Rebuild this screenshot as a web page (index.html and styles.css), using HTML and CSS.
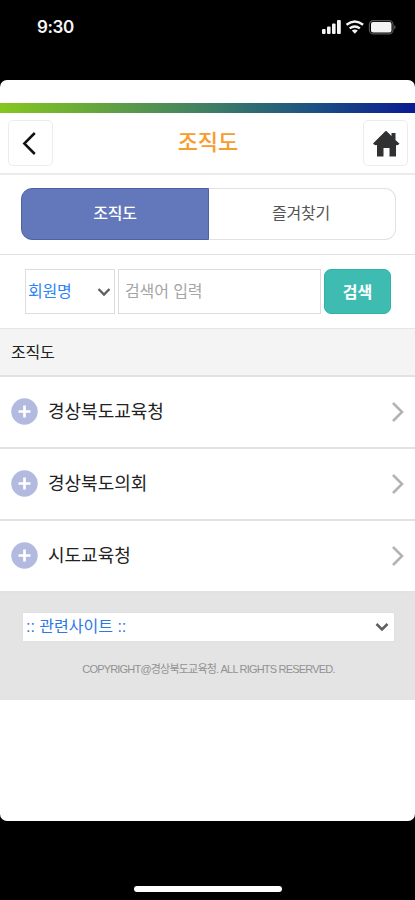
FILE: index.html
```html
<!DOCTYPE html>
<html lang="ko">
<head>
<meta charset="utf-8">
<meta name="viewport" content="width=device-width, initial-scale=1">
<title>조직도</title>
<link rel="stylesheet" href="styles.css">
</head>
<body>
<div class="status">
  <span class="time">9:30</span>
  <svg class="status-icons" width="76" height="16" viewBox="0 0 76 16">
    <g fill="#f4f4f4">
      <rect x="0" y="9" width="3.600" height="5" rx="1"/>
      <rect x="5" y="6.500" width="3.600" height="7.500" rx="1"/>
      <rect x="10" y="3.500" width="3.600" height="10.500" rx="1"/>
      <rect x="15" y="0" width="3.800" height="14" rx="1"/>
      <path d="M32.800 13.800l-3-3.300q3-2.200 6 0z"/>
      <rect x="49" y="2" width="20.500" height="10.500" rx="2"/>
    </g>
    <g fill="none" stroke="#f4f4f4" stroke-width="2.400">
      <path d="M24.500 4.800q8.300-6.500 16.600 0"/>
      <path d="M27.700 8.400q5-3.800 10.200 0"/>
    </g>
    <rect x="47.400" y=".6" width="23.600" height="13.300" rx="4" fill="none" stroke="#555" stroke-width="1.200"/>
    <path d="M72.400 5q2.200 2.200 0 4.500z" fill="#777"/>
  </svg>
</div>
<main class="screen">
  <div class="brand-bar"></div>
  <header class="header">
    <button class="icon-btn" aria-label="이전">
      <svg width="43" height="43" viewBox="0 0 43 43"><path d="M25.800 11L15.300 21.500 25.800 32" fill="none" stroke="#111" stroke-width="2.500"/></svg>
    </button>
    <h1 class="title">조직도</h1>
    <button class="icon-btn" aria-label="홈">
      <svg width="43" height="43" viewBox="0 0 43 43"><path d="M9 21.500L21.300 9.300q.7-.6 1.400 0L27.500 14v-3h4v7l4 3.700q-1.500 2-3.500 1.300v11.500h-6.500v-8.500h-6v8.500h-6.500V23q-2.500.6-4-1.500z" fill="#303133"/></svg>
    </button>
  </header>
  <nav class="tabs">
    <div class="tab tab-active">조직도</div>
    <div class="tab">즐겨찾기</div>
  </nav>
  <div class="search">
    <div class="field kind">
      <span>회원명</span>
      <svg width="14" height="10" viewBox="0 0 14 10"><path d="M1.500 2L7 7.500 12.500 2" fill="none" stroke="#606060" stroke-width="2.300"/></svg>
    </div>
    <div class="field keyword">검색어 입력</div>
    <button class="go">검색</button>
  </div>
  <h2 class="section">조직도</h2>
  <ul class="list">
    <li class="row">
      <svg class="plus" width="27" height="27" viewBox="0 0 27 27"><circle cx="13.500" cy="13.500" r="13.200" fill="#b2badf"/><path d="M13.500 7.500v12M7.500 13.500h12" stroke="#fff" stroke-width="2.700"/></svg>
      <span class="name">경상북도교육청</span>
      <svg width="14" height="22" viewBox="0 0 14 22"><path d="M2 2l9 9-9 9" fill="none" stroke="#b3b3b3" stroke-width="2.600"/></svg>
    </li>
    <li class="row">
      <svg class="plus" width="27" height="27" viewBox="0 0 27 27"><circle cx="13.500" cy="13.500" r="13.200" fill="#b2badf"/><path d="M13.500 7.500v12M7.500 13.500h12" stroke="#fff" stroke-width="2.700"/></svg>
      <span class="name">경상북도의회</span>
      <svg width="14" height="22" viewBox="0 0 14 22"><path d="M2 2l9 9-9 9" fill="none" stroke="#b3b3b3" stroke-width="2.600"/></svg>
    </li>
    <li class="row">
      <svg class="plus" width="27" height="27" viewBox="0 0 27 27"><circle cx="13.500" cy="13.500" r="13.200" fill="#b2badf"/><path d="M13.500 7.500v12M7.500 13.500h12" stroke="#fff" stroke-width="2.700"/></svg>
      <span class="name">시도교육청</span>
      <svg width="14" height="22" viewBox="0 0 14 22"><path d="M2 2l9 9-9 9" fill="none" stroke="#b3b3b3" stroke-width="2.600"/></svg>
    </li>
  </ul>
  <footer class="footer">
    <div class="sites">
      <span>:: 관련사이트 ::</span>
      <svg width="14" height="10" viewBox="0 0 14 10"><path d="M1.500 2L7 7.500 12.500 2" fill="none" stroke="#606060" stroke-width="2.600"/></svg>
    </div>
    <p class="copyright">COPYRIGHT@경상북도교육청. ALL RIGHTS RESERVED.</p>
  </footer>
</main>
<div class="home-area"><div class="home-bar"></div></div>
</body>
</html>
```
FILE: styles.css
```css
* { box-sizing: border-box; }
body {
  margin: 0;
  height: 900px;
  display: flex;
  flex-direction: column;
  background: #000;
  color: #222;
  font-family: "Noto Sans CJK KR", sans-serif;
  overflow: hidden;
}
h1, h2, p, ul { margin: 0; padding: 0; }
svg { display: block; flex: none; }
button { padding: 0; font-family: inherit; }

.status {
  height: 80px;
  padding: 19px 17px 0 37px;
  display: flex;
  justify-content: space-between;
}
.time {
  color: #f6f6f6;
  font: 600 17px/17px Inter, sans-serif;
  letter-spacing: -.4px;
}
.status-icons { margin-top: 1px; }

.screen {
  height: 741px;
  padding-top: 23px;
  background: #fff;
  border-radius: 7px;
  overflow: hidden;
}
.brand-bar { height: 10px; background: linear-gradient(90deg, #86c71e, #3f7f64 50%, #1c5283 75%, #0b1a92); }

.header {
  height: 62px;
  padding: 7px 7px 0 8px;
  display: flex;
  justify-content: space-between;
  align-items: flex-start;
  border-bottom: 2px solid #ebebeb;
}
.icon-btn {
  width: 45px;
  height: 46px;
  border: 1px solid #ebedec;
  border-radius: 5px;
  background: #fff;
}
.title { color: #f99c2b; font-size: 22px; font-weight: 500; line-height: 41px; }

.tabs {
  height: 80px;
  padding: 13px 19px 14px 21px;
  display: grid;
  grid-template-columns: 188px 1fr;
  border-bottom: 1px solid #e0e0e0;
}
.tab {
  border: 1px solid #e2e2e2;
  border-left: 0;
  border-radius: 0 11px 11px 0;
  padding-right: 2px;
  font-size: 16px;
  line-height: 47px;
  text-align: center;
  color: #555;
  letter-spacing: -.2px;
}
.tab-active {
  border: 1px solid #4c62a4;
  border-radius: 11px 0 0 11px;
  padding-right: 0;
  background: #6378bb;
  color: #fff;
  font-weight: 500;
}

.search {
  height: 73px;
  padding: 14px 24px 0 25px;
  display: flex;
  gap: 3px;
}
.field {
  height: 45px;
  border: 1px solid #dcdcdc;
  font-size: 16px;
  line-height: 41px;
}
.kind {
  width: 90px;
  padding: 0 3px 0 2px;
  display: flex;
  align-items: center;
  justify-content: space-between;
  color: #2b83f6;
  letter-spacing: -.2px;
}
.kind span { margin-top: -2px; }
.keyword { width: 203px; padding-left: 6px; color: #a5a5a5; letter-spacing: -.1px; }
.go {
  width: 67px;
  height: 45px;
  border: 1px solid #2fb3a7;
  border-radius: 7px;
  background: #3fbcb2;
  color: #fff;
  font-size: 16px;
  font-weight: 700;
  line-height: 40px;
  padding-bottom: 2px;
}

.section {
  height: 49px;
  padding-left: 11px;
  border-top: 1px solid #e6e6e6;
  border-bottom: 2px solid #e2e2e2;
  background: #f4f4f4;
  font-size: 16px;
  font-weight: 400;
  line-height: 44px;
  letter-spacing: -.2px;
}
.list { list-style: none; }
.row {
  height: 72px;
  padding: 0 10px 0 11px;
  display: flex;
  align-items: center;
  border-bottom: 2px solid #e2e2e2;
}
.plus { margin-top: -1px; }
.name {
  flex: 1;
  margin: -4px 0 0 10px;
  font-size: 18px;
  line-height: 28px;
}
.footer {
  height: 107px;
  padding: 19px 20px 0 22px;
  background: #e4e4e4;
}
.sites {
  height: 30px;
  padding: 0 5px 0 3px;
  display: flex;
  align-items: center;
  justify-content: space-between;
  border: 1px solid #e0e0e0;
  background: #fff;
  color: #2b78e6;
  font: 16px/26px "Liberation Sans", "Noto Sans CJK KR", sans-serif;
}
.copyright {
  margin-top: 19px;
  color: #929292;
  font: 11px/16px "Liberation Sans", "Noto Sans CJK KR", sans-serif;
  letter-spacing: -.8px;
  text-align: center;
}
.home-area {
  flex: 1;
  padding-top: 65px;
  display: flex;
  justify-content: center;
}
.home-bar { width: 148px; height: 6px; border-radius: 3px; background: #fff; }
```
